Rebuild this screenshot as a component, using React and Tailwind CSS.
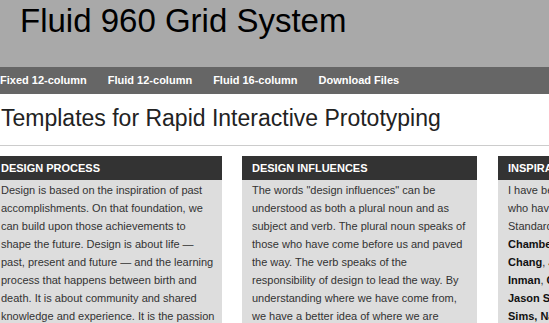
const NAV = ['Fixed 12-column', 'Fluid 12-column', 'Fluid 16-column', 'Download Files'];

const Box = ({ title, className, bodyClass = 'pr-[10px]', children }) => (
  <div className={`shrink-0 bg-[#dddddd] ${className}`}>
    <h2 className="h-[24px] flex items-center bg-[#333333] px-[10px] text-[11px] font-bold uppercase text-white">
      {title}
    </h2>
    <div className={`pl-[10px] pt-[1px] pb-4 text-[11px] leading-[18px] text-[#333] ${bodyClass}`}>{children}</div>
  </div>
);

const App = () => {
  return (
    <div className="h-[323px] w-[549px] overflow-hidden bg-white font-['Liberation_Sans',Arial,sans-serif]">
      {/* Masthead */}
      <div className="h-[67px] bg-[#a9a9a9] pl-[20px] pt-[3px]">
        <h1 className="text-[33px] leading-[36px] text-black">Fluid 960 Grid System</h1>
      </div>

      {/* Nav */}
      <ul className="flex h-[27px] items-center gap-[21px] bg-[#666666] text-[11px] font-bold text-white">
        {NAV.map((item) => (
          <li key={item} className="whitespace-nowrap">{item}</li>
        ))}
      </ul>

      <h2 className="mt-[11px] pl-[1px] text-[23px] leading-[26px] text-[#222]">
        Templates for Rapid Interactive Prototyping
      </h2>
      <div className="mt-[14px] h-px bg-[#cccccc]" />

      {/* Boxes */}
      <div className="mt-[10px] ml-[-9px] flex">
        <Box title="Design Process" className="w-[231px]" bodyClass="pr-[4px]">
          Design is based on the inspiration of past accomplishments. On that foundation, we can build upon those
          achievements to shape the future. Design is about life — past, present and future — and the learning
          process that happens between birth and death. It is about community and shared knowledge and experience.
          It is the passion that drives us to create.
        </Box>
        <Box title="Design Influences" className="ml-[20px] w-[235px]">
          The words "design influences" can be understood as both a plural noun and as subject and verb. The plural
          noun speaks of those who have come before us and paved the way. The verb speaks of the responsibility of
          design to lead the way. By understanding where we have come from, we have a better idea of where we are
          going.
        </Box>
        <Box title="Inspiration" className="ml-[21px] w-[235px]">
          <span className="whitespace-nowrap">I have been inspired by many people</span>
          <br />
          <span className="whitespace-nowrap">who have contributed to the Web</span>
          <br />
          <span className="whitespace-nowrap">Standards movement, including</span>
          <br />
          <b className="text-[#111]">Chambers</b>, <b className="text-[#111]">Dan Cederholm</b>,
          <br />
          <b className="text-[#111]">Chang</b>, <b className="text-[#111]">Jeff Croft</b>,
          <br />
          <b className="text-[#111]">Inman</b>, <b className="text-[#111]">Cameron Moll</b>,
          <br />
          <b className="text-[#111]">Jason Santa Maria</b>,
          <br />
          <b className="text-[#111]">Sims, Nathan Smith</b>
        </Box>
      </div>
    </div>
  );
};

export default App;
